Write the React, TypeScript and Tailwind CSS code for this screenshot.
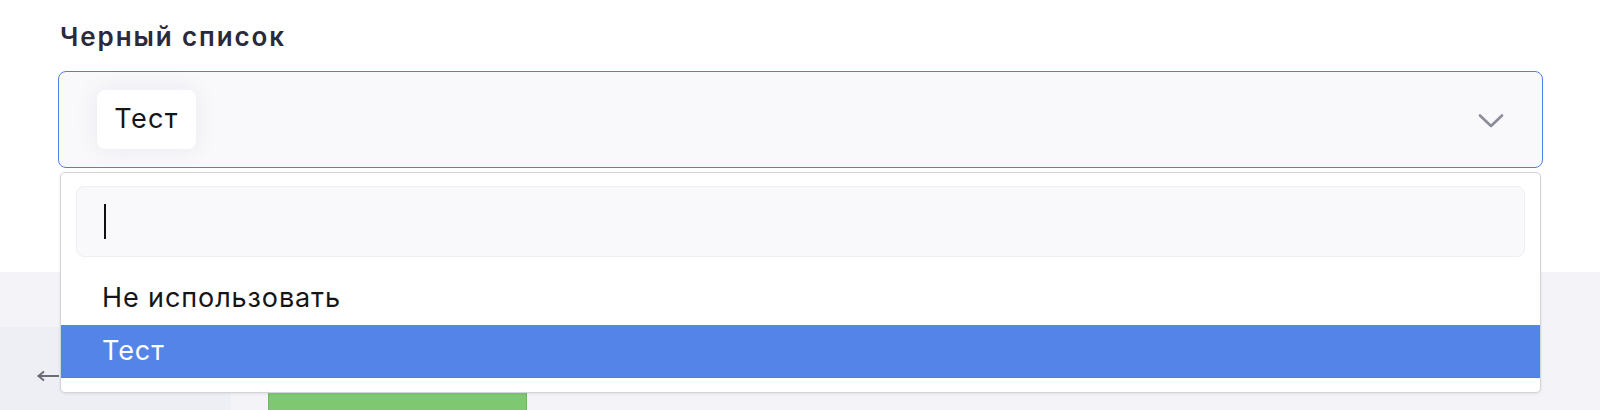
import React from "react";

export default function App() {
  return (
    <div
      className="w-[1600px] h-[410px] overflow-hidden bg-[#f4f4f8] flex flex-col"
      style={{ fontFamily: "Inter, 'Noto Sans', sans-serif" }}
    >
      <div className="h-[272px] shrink-0 bg-white pt-[22px] pl-[58px]">
        <h2 className="text-[26px] leading-[30px] font-semibold text-[#2b2a3a] pl-[2px] tracking-[1.9px]">
          Черный список
        </h2>
        <div className="relative mt-[19px] w-[1485px]">
          <div className="h-[97px] rounded-[8px] border-[1.5px] border-[#4f7fe6] bg-[#f9f9fb] flex items-center justify-between pl-[38px] pr-[38px]">
            <div className="h-[59px] w-[99px] rounded-[8px] bg-white shadow-[0_0_22px_rgba(90,90,150,0.10)] flex items-center justify-center text-[27px] tracking-[1.4px] text-[#151515]">
              Тест
            </div>
            <svg width="26" height="16" viewBox="0 0 26 16" className="mt-[3px]">
              <path d="M2 2.5 L13 13 L24 2.5" fill="none" stroke="#8b8b9b" strokeWidth="2.6" strokeLinecap="round" strokeLinejoin="round" />
            </svg>
          </div>
          <div className="absolute left-[2px] right-[2px] top-[calc(100%+4px)] z-10 rounded-[5px] border border-[#d3d3d8] bg-white shadow-[0_1px_3px_rgba(0,0,0,0.08)] pt-[13px] pb-[14px]">
            <div className="mx-[15px] h-[71px] rounded-[8px] border border-[#efeff3] bg-[#f9f9fb] flex items-center pl-[27px]">
              <div className="w-[1.5px] h-[35px] bg-[#111]" />
            </div>
            <div className="mt-[15px] h-[53px] flex items-center pl-[41px] text-[27px] tracking-[0.9px] text-[#151515]">
              Не использовать
            </div>
            <div className="h-[53px] flex items-center pl-[41px] text-[27px] tracking-[0.9px] text-white bg-[#5584e8] border-b border-[#4f7ee4]">
              Тест
            </div>
          </div>
        </div>
      </div>
      <div className="h-[55px] shrink-0" />
      <div className="flex flex-1">
        <div className="w-[231px] bg-[#eeeef5] pl-[36px] pt-[43px]">
          <svg width="24" height="12" viewBox="0 0 24 12">
            <path d="M23 6 H3 M8 1.5 L2.5 6 L8 10.5" fill="none" stroke="#6b6b78" strokeWidth="2" />
          </svg>
        </div>
        <div className="flex-1 pl-[37px] pt-[20px]">
          <div className="w-[259px] h-[80px] rounded-[4px] bg-[#7ec872] border border-[#6db862]" />
        </div>
      </div>
    </div>
  );
}
